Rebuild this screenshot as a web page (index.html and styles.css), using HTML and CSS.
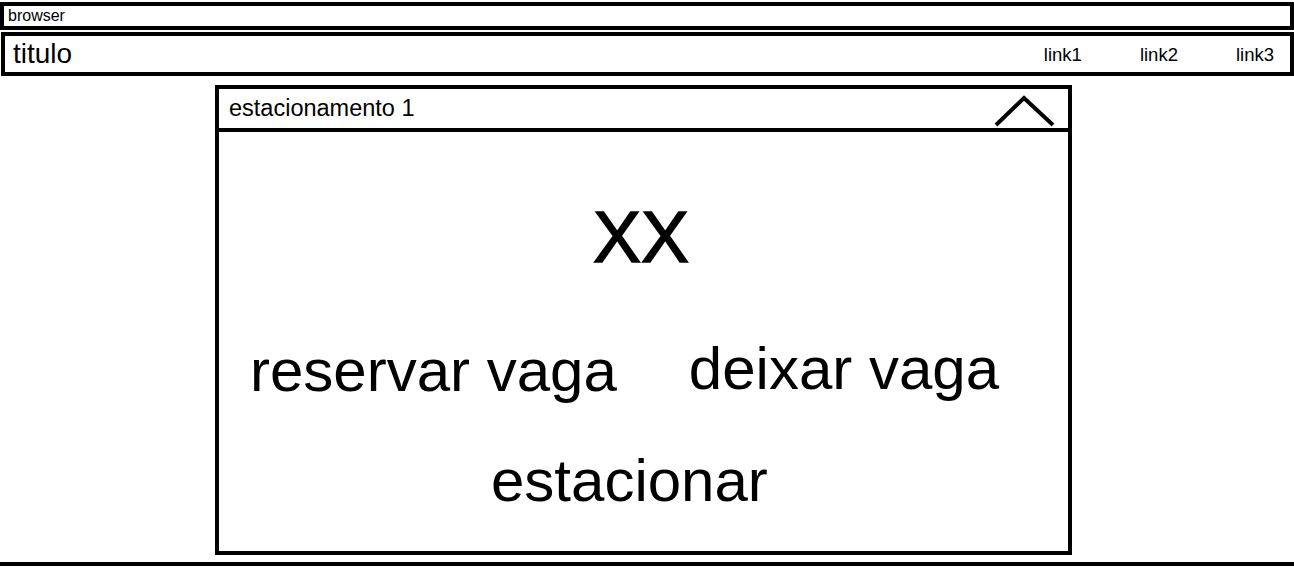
FILE: index.html
```html
<!DOCTYPE html>
<html lang="pt">
<head>
<meta charset="utf-8">
<title>estacionamento</title>
<link rel="stylesheet" href="styles.css">
</head>
<body>
  <div class="browser-bar">browser</div>
  <header class="title-bar">
    <div class="title">titulo</div>
    <nav class="links">
      <span class="link">link1</span>
      <span class="link">link2</span>
      <span class="link">link3</span>
    </nav>
  </header>
  <section class="panel">
    <div class="panel-head">
      <span class="panel-title">estacionamento 1</span>
      <svg class="chevron" width="62" height="34" viewBox="0 0 62 34" aria-hidden="true">
        <polyline points="2,31 30,4 59,31" fill="none" stroke="#000" stroke-width="4" stroke-linejoin="miter"/>
      </svg>
    </div>
    <div class="panel-body">
      <div class="count">XX</div>
      <div class="actions">
        <span class="action reserve">reservar vaga</span>
        <span class="action leave">deixar vaga</span>
      </div>
      <div class="action park">estacionar</div>
    </div>
  </section>
  <div class="bottom-line"></div>
</body>
</html>
```

FILE: styles.css
```css
* { box-sizing: border-box; }

html, body {
  margin: 0;
  padding: 0;
  background: #fff;
}

body {
  width: 1294px;
  padding-top: 2px;
  font-family: "Liberation Sans", Arial, sans-serif;
  color: #000;
}

.browser-bar {
  height: 28px;
  border: 4px solid #000;
  padding-left: 4px;
  font-size: 16px;
  line-height: 1;
  display: flex;
  align-items: center;
}

.title-bar {
  margin-top: 2px;
  margin-left: 1px;
  height: 44px;
  border: 4px solid #000;
  padding: 0 16px 0 8px;
  display: flex;
  align-items: center;
  justify-content: space-between;
}

.title {
  font-size: 28px;
  line-height: 1;
}

.links {
  display: flex;
  gap: 58px;
  padding-top: 3px;
}

.link {
  font-size: 18.5px;
  line-height: 1;
}

.panel {
  margin: 9px 0 0 215px;
  width: 857px;
  height: 470px;
  border: 4px solid #000;
  display: flex;
  flex-direction: column;
}

.panel-head {
  height: 43px;
  border-bottom: 4px solid #000;
  display: flex;
  align-items: center;
  justify-content: space-between;
  padding: 0 12px 0 10px;
}

.panel-title {
  font-size: 23.5px;
  line-height: 1;
  padding-top: 1px;
}

.chevron {
  align-self: flex-end;
  display: block;
}

.panel-body {
  flex: 1;
  padding-top: 69px;
  display: flex;
  flex-direction: column;
}

.count {
  font-size: 72px;
  line-height: 1;
  text-align: center;
  padding-right: 5px;
  -webkit-text-stroke: 1.5px #000;
}

.actions {
  margin-top: 68px;
  display: flex;
  align-items: flex-start;
  gap: 72px;
  padding-left: 31px;
}

.action {
  font-size: 60px;
  line-height: 1;
}

.leave {
  margin-top: -2px;
}

.park {
  margin-top: 50px;
  padding-left: 272px;
}

.bottom-line {
  margin-top: 7px;
  height: 4px;
  background: #000;
}
```
